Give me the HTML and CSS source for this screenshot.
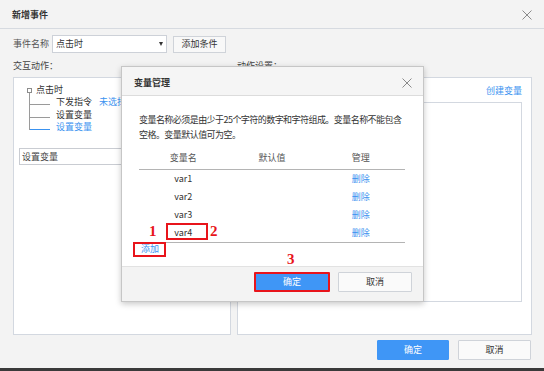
FILE: index.html
```html
<!DOCTYPE html>
<html lang="zh-CN">
<head>
<meta charset="utf-8">
<title>新增事件</title>
<link rel="stylesheet" href="styles.css">
</head>
<body>
<div class="window">
  <div class="titlebar">
    <span class="title">新增事件</span>
    <svg class="close" width="10" height="10" viewBox="0 0 10 10"><path d="M0.5 0.5 L9.5 9.5 M9.5 0.5 L0.5 9.5" stroke="#8a8a8a" stroke-width="1" fill="none"/></svg>
  </div>

  <div class="event-row">
    <span class="label">事件名称</span>
    <div class="select"><span>点击时</span><span class="caret"></span></div>
    <div class="btn-add">添加条件</div>
  </div>

  <div class="columns">
    <div class="col col-left">
      <div class="col-title">交互动作：</div>
      <div class="panel panel-left">
        <div class="tree">
          <div class="root"><span class="node"></span><span class="root-text">点击时</span></div>
          <div class="children">
            <div class="child"><span class="conn"></span><span class="ctext">下发指令</span><span class="link unsel">未选择</span></div>
            <div class="child"><span class="conn"></span><span class="ctext">设置变量</span></div>
            <div class="child active"><span class="conn"></span><span class="ctext">设置变量</span></div>
          </div>
        </div>
        <div class="setbox">设置变量</div>
      </div>
    </div>
    <div class="col col-right">
      <div class="col-title">动作设置：</div>
      <div class="panel panel-right">
        <div class="create-row"><span class="link">创建变量</span></div>
        <div class="inner-box"></div>
      </div>
    </div>
  </div>

  <div class="footer">
    <div class="btn primary">确定</div>
    <div class="btn">取消</div>
  </div>
  <div class="taskbar"></div>

  <div class="modal">
    <div class="modal-head">
      <span class="modal-title">变量管理</span>
      <svg class="close" width="10" height="10" viewBox="0 0 10 10"><path d="M0.5 0.5 L9.5 9.5 M9.5 0.5 L0.5 9.5" stroke="#8a8a8a" stroke-width="1" fill="none"/></svg>
    </div>
    <div class="modal-body">
      <p class="desc">变量名称必须是由少于25个字符的数字和字符组成。变量名称不能包含<br>空格。变量默认值可为空。</p>
      <div class="table">
        <div class="thead">
          <span>变量名</span><span>默认值</span><span>管理</span>
        </div>
        <div class="tbody">
          <div class="trow"><span>var1</span><span></span><span class="link">删除</span></div>
          <div class="trow"><span>var2</span><span></span><span class="link">删除</span></div>
          <div class="trow"><span>var3</span><span></span><span class="link">删除</span></div>
          <div class="trow"><span>var4</span><span></span><span class="link">删除</span></div>
        </div>
        <div class="add-link link">添加</div>
      </div>
    </div>
    <div class="modal-foot">
      <div class="btn primary mark">确定</div>
      <div class="btn">取消</div>
    </div>
  </div>

  <div class="anno-box box1"></div>
  <div class="anno-box box2"></div>
  <div class="anno-num n1">1</div>
  <div class="anno-num n2">2</div>
  <div class="anno-num n3">3</div>
</div>
</body>
</html>
```

FILE: styles.css
```css
* { box-sizing: border-box; margin: 0; padding: 0; }
html, body { width: 544px; height: 371px; overflow: hidden; }
body {
  background: #f3f3f3;
  font-family: "Noto Sans CJK SC", "Noto Sans", "Liberation Sans", sans-serif;
  font-size: 9px;
  color: #333;
}
.window {
  position: relative;
  width: 544px;
  height: 371px;
  display: flex;
  flex-direction: column;
}
.titlebar {
  height: 29px;
  border-bottom: 1px solid #d6dae0;
  display: flex;
  align-items: center;
  justify-content: space-between;
  padding: 1px 12px 0 12px;
}
.title { font-weight: bold; line-height: 12px; color: #333; }
.close { display: block; }

.event-row {
  display: flex;
  align-items: center;
  padding: 6px 13px 0 13px;
  height: 24px;
}
.label { width: 39px; color: #555; line-height: 12px; }
.select {
  width: 115px;
  height: 18px;
  background: #fff;
  border: 1px solid #cdd1d8;
  display: flex;
  align-items: center;
  justify-content: space-between;
  padding: 0 3px 0 3px;
  line-height: 12px;
}
.caret {
  width: 0; height: 0;
  border-left: 2.5px solid transparent;
  border-right: 2.5px solid transparent;
  border-top: 4px solid #333;
}
.btn-add {
  margin-left: 6px;
  width: 53px;
  height: 17px;
  background: #f8f8f8;
  border: 1px solid #cfd3d9;
  display: flex;
  align-items: center;
  justify-content: center;
  line-height: 12px;
}

.columns {
  display: flex;
  gap: 6px;
  padding: 0 12px 0 13px;
}
.col-left { width: 218px; }
.col-right { width: 295px; }
.col-title {
  height: 24px;
  padding-top: 7px;
  line-height: 12px;
  color: #444;
}
.panel {
  height: 258px;
  background: #fff;
  border: 1px solid #d3d8e0;
}
.panel-left { padding: 6px 5px 0 5px; }
.tree { padding-left: 8px; }
.root {
  display: flex;
  align-items: center;
  height: 12px;
  line-height: 12px;
}
.node {
  width: 5px; height: 5px;
  border: 1px solid #8c8c8c;
  background: #fff;
}
.root-text { margin-left: 4px; }
.children {
  position: relative;
  margin-left: 2px;
}
.children::before {
  content: "";
  position: absolute;
  left: 0;
  top: -3px;
  bottom: 4px;
  width: 1px;
  background: #9a9a9a;
}
.child {
  display: flex;
  align-items: center;
  height: 12.5px;
  line-height: 12px;
}
.conn {
  align-self: flex-start;
  width: 21px;
  height: 9px;
  border-bottom: 1px solid #9a9a9a;
}
.ctext { margin-left: 6px; }
.link { color: #3a92f0; }
.unsel { margin-left: 7px; }
.child.active .conn { border-bottom-color: #3a92f0; }
.child.active .ctext { color: #3a92f0; }
.setbox {
  margin-top: 14px;
  height: 17px;
  border: 1px solid #c9ccd2;
  background: #fff;
  padding-left: 2px;
  line-height: 15px;
  color: #444;
}

.panel-right { padding: 7px 9px 0 9px; }
.create-row { text-align: right; line-height: 12px; }
.inner-box {
  margin-top: 5px;
  height: 200px;
  border: 1px solid #d3d8e0;
}

.footer {
  display: flex;
  justify-content: flex-end;
  gap: 9px;
  padding: 5px 13px 0 0;
}
.btn {
  width: 73px;
  height: 20px;
  background: #fafafa;
  border: 1px solid #cfd3d9;
  border-radius: 1px;
  display: flex;
  align-items: center;
  justify-content: center;
  line-height: 12px;
  color: #333;
}
.btn.primary {
  width: 72px;
  background: #3f96f6;
  border-color: #3f96f6;
  color: #fff;
}
.taskbar {
  margin-top: auto;
  height: 3px;
  background: #3a3a3a;
}

.modal {
  position: absolute;
  left: 121px;
  top: 66px;
  width: 303px;
  height: 236px;
  background: #fff;
  border: 1px solid #c6c6c6;
  box-shadow: 0 2px 6px rgba(0,0,0,0.22);
  display: flex;
  flex-direction: column;
}
.modal-head {
  height: 29px;
  background: #f5f5f5;
  border-bottom: 1px solid #dcdcdc;
  display: flex;
  align-items: center;
  justify-content: space-between;
  padding: 3px 11px 0 12px;
}
.modal-title { font-weight: bold; line-height: 12px; color: #333; }
.modal-body {
  flex: 1;
  padding: 16px 10px 0 17px;
}
.desc { line-height: 15px; color: #333; white-space: nowrap; letter-spacing: -0.55px; }
.table { margin-top: 4px; width: 266px; }
.thead, .trow {
  display: grid;
  grid-template-columns: 1fr 1fr 1fr;
  align-items: center;
  text-align: center;
  line-height: 12px;
}
.thead {
  height: 24px;
  border-bottom: 1px solid #b4b4b4;
  color: #555;
}
.tbody { border-bottom: 1px solid #b4b4b4; }
.trow { height: 18px; }
.add-link { line-height: 12px; padding-left: 2px; }
.modal-foot {
  height: 35px;
  background: #f3f3f3;
  border-top: 1px solid #e2e2e2;
  display: flex;
  justify-content: flex-end;
  gap: 8px;
  padding: 5px 11px 0 0;
}
.modal-foot .btn { width: 74px; }
.modal-foot .btn.primary { width: 76px; }
.btn.mark { border: 2px solid #e8141b; }

.anno-box {
  position: absolute;
  border: 2px solid #e8141b;
}
.box1 { left: 133px; top: 242px; width: 33px; height: 15px; }
.box2 { left: 166px; top: 223px; width: 42px; height: 17px; }
.anno-num {
  position: absolute;
  font-family: "Liberation Serif", serif;
  font-weight: bold;
  font-size: 15px;
  line-height: 15px;
  color: #e8141b;
}
.n1 { left: 149px; top: 224px; }
.n2 { left: 210px; top: 224px; }
.n3 { left: 287px; top: 252px; }
```
